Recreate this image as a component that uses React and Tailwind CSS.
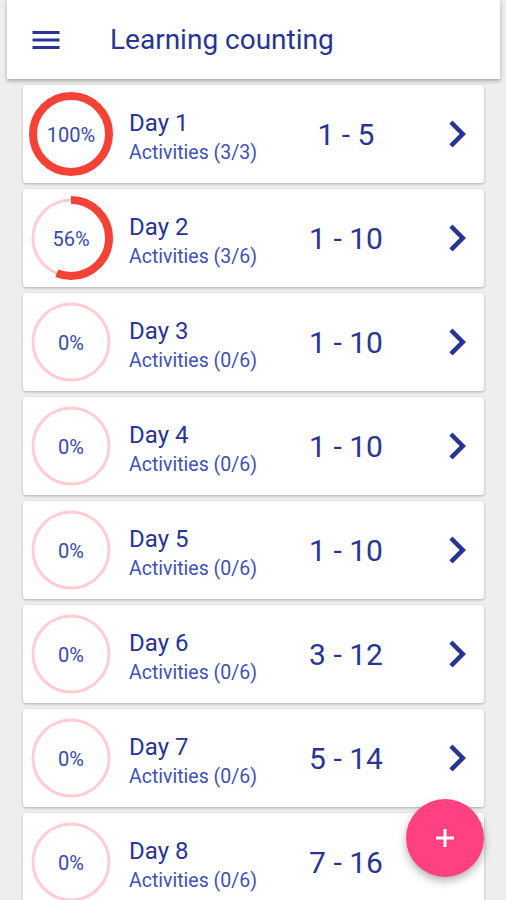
import React from "react";

const days = [
  { day: 1, done: 3, total: 3, pct: 100, range: "1 - 5" },
  { day: 2, done: 3, total: 6, pct: 56, range: "1 - 10" },
  { day: 3, done: 0, total: 6, pct: 0, range: "1 - 10" },
  { day: 4, done: 0, total: 6, pct: 0, range: "1 - 10" },
  { day: 5, done: 0, total: 6, pct: 0, range: "1 - 10" },
  { day: 6, done: 0, total: 6, pct: 0, range: "3 - 12" },
  { day: 7, done: 0, total: 6, pct: 0, range: "5 - 14" },
  { day: 8, done: 0, total: 6, pct: 0, range: "7 - 16" },
];

const R = 38;
const C = 2 * Math.PI * R;

// progress ring with the percentage in the middle
const Ring = ({ pct }) => (
  <svg width="84" height="84" viewBox="0 0 84 84" className="shrink-0">
    <circle cx="42" cy="42" r={R} fill="none" stroke="#ffcdd2" strokeWidth="3" />
    {pct > 0 && (
      <circle
        cx="42"
        cy="42"
        r={R}
        fill="none"
        stroke="#f44336"
        strokeWidth="8"
        strokeDasharray={`${(C * pct) / 100} ${C}`}
        transform="rotate(-90 42 42)"
      />
    )}
    <text
      x="42"
      y="43"
      textAnchor="middle"
      dominantBaseline="central"
      fontSize="20"
      fill="#3949ab"
      fontFamily="Roboto, sans-serif"
    >
      {pct}%
    </text>
  </svg>
);

const DayCard = ({ item }) => (
  <div className="flex items-center h-[98px] bg-white rounded-[3px] shadow-[0_1px_3px_rgba(0,0,0,0.28)]">
    <div className="ml-[6px]">
      <Ring pct={item.pct} />
    </div>
    <div className="flex-1 flex flex-col ml-[16px] pt-[4px]">
      <span className="text-[24px] leading-[28px] text-[#283593]">Day {item.day}</span>
      <span className="mt-[5px] text-[19.5px] leading-[22px] text-[#3f51b5]">
        Activities ({item.done}/{item.total})
      </span>
    </div>
    <div className="w-[120px] mr-[24px] text-center text-[30px] leading-[36px] text-[#283593] pt-[2px]">
      {item.range}
    </div>
    <svg width="54" height="54" viewBox="0 0 24 24" className="shrink-0" fill="#283593">
      <path d="M10 6L8.59 7.41 13.17 12l-4.58 4.59L10 18l6-6z" />
    </svg>
  </div>
);

export default function App() {
  return (
    <div className="relative h-[900px] overflow-hidden bg-[#eeeeee]" style={{ fontFamily: "Roboto, 'Noto Sans', sans-serif" }}>
      {/* Toolbar */}
      <div className="ml-[7px] mr-[6px] h-[79px] bg-white flex items-center shadow-[0_2px_4px_rgba(0,0,0,0.3)]">
        <svg width="36" height="36" viewBox="0 0 24 24" className="ml-[21px]" fill="#283593">
          <path d="M3 18h18v-2H3v2zm0-5h18v-2H3v2zm0-7v2h18V6H3z" />
        </svg>
        <span className="ml-[46px] text-[28px] leading-[32px] text-[#283593]">Learning counting</span>
      </div>

      {/* Day list */}
      <div className="mt-[6px] ml-[23px] mr-[22px] flex flex-col gap-[6px]">
        {days.map((d) => (
          <DayCard key={d.day} item={d} />
        ))}
      </div>

      {/* FAB */}
      <button className="absolute left-[406px] top-[799px] w-[78px] h-[78px] rounded-full bg-[#ff4081] flex items-center justify-center shadow-[0_4px_8px_rgba(0,0,0,0.3)]">
        <svg width="24" height="24" viewBox="0 0 24 24">
          <path d="M12 3v18M3 12h18" stroke="white" strokeWidth="3" />
        </svg>
      </button>
    </div>
  );
}
